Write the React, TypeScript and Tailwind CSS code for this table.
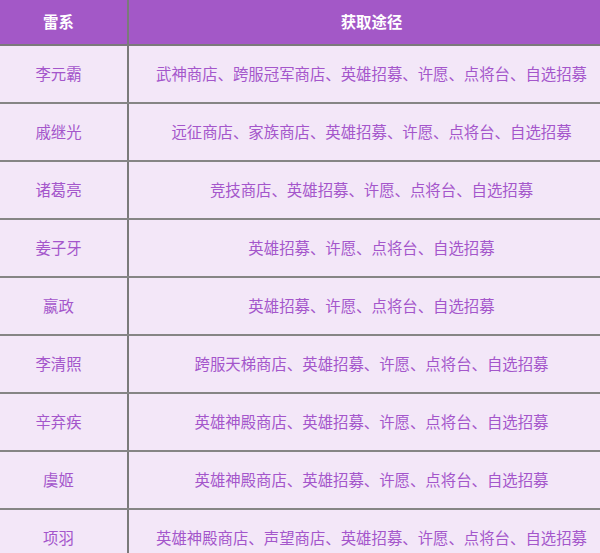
const rows = [
  { name: "李元霸", way: "武神商店、跨服冠军商店、英雄招募、许愿、点将台、自选招募" },
  { name: "戚继光", way: "远征商店、家族商店、英雄招募、许愿、点将台、自选招募" },
  { name: "诸葛亮", way: "竞技商店、英雄招募、许愿、点将台、自选招募" },
  { name: "姜子牙", way: "英雄招募、许愿、点将台、自选招募" },
  { name: "嬴政", way: "英雄招募、许愿、点将台、自选招募" },
  { name: "李清照", way: "跨服天梯商店、英雄招募、许愿、点将台、自选招募" },
  { name: "辛弃疾", way: "英雄神殿商店、英雄招募、许愿、点将台、自选招募" },
  { name: "虞姬", way: "英雄神殿商店、英雄招募、许愿、点将台、自选招募" },
  { name: "项羽", way: "英雄神殿商店、声望商店、英雄招募、许愿、点将台、自选招募" },
];

export default function App() {
  return (
    <div
      className="w-[600px] h-[553px] overflow-hidden bg-[#f3e7f8]"
      style={{ fontFamily: '"Noto Sans CJK SC", "Noto Sans", sans-serif' }}
    >
      <div className="-ml-[10px] w-[624px]">
        <div className="grid grid-cols-[139px_1fr] h-[46px] bg-[#a358c7] border-b-2 border-[#7a7a7a] text-white font-bold text-[15.4px]">
          <div className="flex items-center justify-center border-r-2 border-[#7a7a7a]">
            雷系
          </div>
          <div className="flex items-center justify-center">获取途径</div>
        </div>
        {rows.map((row, index) => (
          <div
            key={index}
            className="grid grid-cols-[139px_1fr] h-[58px] border-b-2 border-[#858585] text-[15.4px] text-[#a456cb]"
          >
            <div className="flex items-center justify-center border-r-2 border-[#7a7a7a]">
              {row.name}
            </div>
            <div className="flex items-center justify-center whitespace-nowrap">
              {row.way}
            </div>
          </div>
        ))}
      </div>
    </div>
  );
}
